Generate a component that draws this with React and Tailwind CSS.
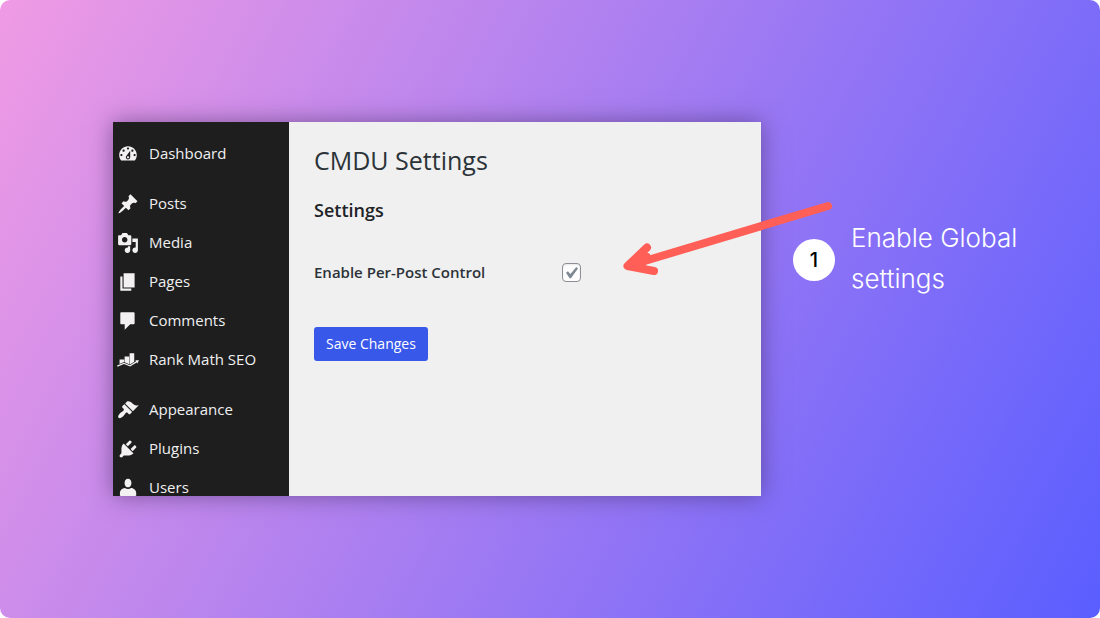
import React from "react";

const ICONS = {
  dashboard:
    "M3.76 16h12.48c1.1-1.37 1.76-3.11 1.76-5 0-4.42-3.58-8-8-8s-8 3.58-8 8c0 1.89.66 3.63 1.76 5zM10 4c.55 0 1 .45 1 1s-.45 1-1 1-1-.45-1-1 .45-1 1-1zM6 6c.55 0 1 .45 1 1s-.45 1-1 1-1-.45-1-1 .45-1 1-1zm8 0c.55 0 1 .45 1 1s-.45 1-1 1-1-.45-1-1 .45-1 1-1zm-5.37 5.55L12 7v6c0 1.1-.9 2-2 2s-2-.9-2-2c0-.57.24-1.08.63-1.45zM4 10c.55 0 1 .45 1 1s-.45 1-1 1-1-.45-1-1 .45-1 1-1zm12 0c.55 0 1 .45 1 1s-.45 1-1 1-1-.45-1-1 .45-1 1-1zm-5 3c0-.55-.45-1-1-1s-1 .45-1 1 .45 1 1 1 1-.45 1-1z",
  post: "M10.44 3.02l1.82-1.82 6.36 6.35-1.83 1.82c-1.05-.68-2.48-.57-3.41.36l-.75.75c-.92.93-1.04 2.35-.35 3.41l-1.83 1.82-2.41-2.41-2.8 2.79c-.42.42-3.38 2.71-3.8 2.29s1.86-3.39 2.28-3.81l2.79-2.79L4.1 9.36l1.83-1.82c1.05.69 2.48.57 3.4-.36l.75-.75c.93-.92 1.05-2.35.36-3.41z",
  media:
    "M13 11V4c0-.55-.45-1-1-1h-1.67L9 1H5L3.67 3H2c-.55 0-1 .45-1 1v7c0 .55.45 1 1 1h10c.55 0 1-.45 1-1zM7 4.5c1.38 0 2.5 1.12 2.5 2.5S8.38 9.5 7 9.5 4.5 8.38 4.5 7 5.62 4.5 7 4.5zM14 6h5v10.5c0 1.38-1.12 2.5-2.5 2.5S14 17.88 14 16.5s1.12-2.5 2.5-2.5c.17 0 .34.02.5.05V9h-3V6zm-4 8.05V13h2v3.5c0 1.38-1.12 2.5-2.5 2.5S7 17.88 7 16.5 8.12 14 9.5 14c.17 0 .34.02.5.05z",
  page: "M6 15V2h10v13H6zm-1 1h8v2H3V5h2v11z",
  comments:
    "M4 2h11c.6 0 1 .4 1 1v9c0 .6-.4 1-1 1h-3l-5 5v-5H4c-.6 0-1-.4-1-1V3c0-.6.4-1 1-1z",
  rank: "m462 234.84-76.17 3.43 13.43 21-127 81.18-126-52.93-146.26 60.97 10.14 24.34 136.1-56.71 128.57 54 138.69-88.61 13.43 21zM54.1 312.78l92.18-38.41 4.49 1.89v-54.58H54.1zM265 89.21v235.05l7.26 3 89.43-57.14V89.21zM159.56 280l96.67 40.62V155.43h-96.67z",
  appearance:
    "M14.48 11.06L7.41 3.99l1.5-1.5c.5-.56 2.3-.47 3.51.32 1.21.8 1.43 1.28 2.91 2.1 1.18.64 2.45 1.26 4.45.85zm-.71.71L6.7 4.7 4.93 6.47c-.39.39-.39 1.02 0 1.41l1.06 1.06c.39.39.39 1.03 0 1.42-.6.6-1.43 1.11-2.21 1.69-.35.26-.7.53-1.01.84C1.43 14.23.4 16.08 1.4 17.07c.99 1 2.84-.03 4.18-1.36.31-.31.58-.66.85-1.02.57-.78 1.08-1.61 1.69-2.21.39-.39 1.02-.39 1.41 0l1.06 1.06c.39.39 1.02.39 1.41 0z",
  plugins:
    "M13.11 4.36L9.87 7.6 8 5.73l3.24-3.24c.35-.34 1.05-.2 1.56.32.52.51.66 1.21.31 1.55zm-8 1.77l.91-1.12 9.01 9.01-1.19.84c-.71.71-2.63 1.16-3.82 1.16H6.14L4.9 17.26c-.59.59-1.54.59-2.12 0-.59-.58-.59-1.53 0-2.12l1.24-1.24v-3.88c0-1.13.4-3.19 1.09-3.89zm7.26 3.97l3.24-3.24c.34-.35 1.04-.21 1.55.31.52.51.66 1.21.31 1.55l-3.24 3.25z",
  users:
    "M10 9.25c-2.27 0-3.1-2.2-3.1-3.9C6.9 3.4 8 1.6 10 1.6s3.1 1.8 3.1 3.75c0 1.7-.83 3.9-3.1 3.9zM7.23 10c.8.7 1.7 1 2.77 1s1.97-.3 2.77-1c2.5 0 4.7 2.33 4.7 4.53v2.49s-3.65 1.13-7.4 1.13c-3.75 0-7.4-1.13-7.4-1.13v-2.49c0-2.25 2.04-4.48 4.56-4.53z",
};

const GROUPS = [
  [["dashboard", "Dashboard"]],
  [
    ["post", "Posts"],
    ["media", "Media"],
    ["page", "Pages"],
    ["comments", "Comments"],
    ["rank", "Rank Math SEO"],
  ],
  [
    ["appearance", "Appearance"],
    ["plugins", "Plugins"],
    ["users", "Users"],
  ],
];

function MenuIcon({ name }) {
  return (
    <svg
      className="size-[22px] shrink-0 fill-[#f3f1f1]"
      viewBox={name === "rank" ? "0 0 462 462" : "0 0 20 20"}
      aria-hidden="true"
    >
      <path fillRule="evenodd" d={ICONS[name]} />
    </svg>
  );
}

function Sidebar() {
  return (
    <nav className="w-44 shrink-0 overflow-hidden bg-[#1e1e1e] pt-3">
      <div className="-mb-[11px] flex flex-col gap-[11px]">
        {GROUPS.map((items) => (
          <ul key={items[0][0]}>
            {items.map(([icon, label]) => (
              <li key={label}>
                <a
                  href="#"
                  className="flex h-[39px] items-center gap-[10px] pl-1 text-[15px] whitespace-nowrap text-[#f0f0f1]"
                >
                  <MenuIcon name={icon} />
                  {label}
                </a>
              </li>
            ))}
          </ul>
        ))}
      </div>
    </nav>
  );
}

function Settings() {
  return (
    <main className="flex-1 bg-[#f0f0f0] px-[25px] pt-5 text-[#1d2327]">
      <h1 className="text-[25px] leading-9 text-[#2c3338]">CMDU Settings</h1>
      <form onSubmit={(e) => e.preventDefault()}>
        <h2 className="mt-5 text-lg leading-6 font-semibold">Settings</h2>
        <div className="mt-9 flex h-7 items-center">
          <label
            htmlFor="per-post"
            className="w-[248px] text-[15px] font-semibold text-[#2c3338]"
          >
            Enable Per-Post Control
          </label>
          <span className="relative flex">
            <input
              id="per-post"
              type="checkbox"
              defaultChecked
              className="peer size-[19px] appearance-none rounded border border-[#8c8f94] bg-white shadow-[inset_0_1px_2px_rgba(0,0,0,0.1)]"
            />
            <svg
              className="pointer-events-none invisible absolute inset-0 size-full fill-[#7e8993] peer-checked:visible"
              viewBox="0 0 19 19"
              aria-hidden="true"
            >
              <path d="M14.3 4.1 16 5.5 8.9 15.2H7.6L4 9.7l1.9-1.5 2.5 2.7z" />
            </svg>
          </span>
        </div>
        <button
          type="submit"
          className="mt-[41px] h-[34px] rounded-[3px] bg-[#3858e9] px-3 text-sm text-white"
        >
          Save Changes
        </button>
      </form>
    </main>
  );
}

function Arrow() {
  return (
    <svg
      className="pointer-events-none absolute top-[74px] -right-[76px] h-[84px] w-[220px] fill-none stroke-[#ff5f57]"
      viewBox="617 196 220 84"
      strokeWidth="8"
      strokeLinecap="round"
      strokeLinejoin="round"
      aria-hidden="true"
    >
      <path d="M828 206 628 266M647 247.500 627.500 266 654 271" />
      <path d="M635 262 647 257 640 266z" />
    </svg>
  );
}

export default function App() {
  return (
    <div className="bg-white font-['Open_Sans',sans-serif]">
      <div className="flex min-h-screen items-center rounded-[10px] bg-[linear-gradient(118deg,#f09be4,#5a5eff)] pr-8 pl-[113px]">
        <div className="flex flex-1 items-start gap-8">
          <div className="relative flex flex-1 shadow-[0_0_22px_rgba(60,40,90,0.55)]">
            <Sidebar />
            <Settings />
            <Arrow />
          </div>
          <section className="flex w-[275px] items-center gap-4 pt-[95px] font-['Inter',sans-serif]">
            <span className="mt-1 flex size-[42px] shrink-0 items-center justify-center rounded-full bg-white text-xl font-medium text-black">
              1
            </span>
            <p className="w-48 text-[26px] leading-[41px] font-light text-white">
              Enable Global settings
            </p>
          </section>
        </div>
      </div>
    </div>
  );
}
